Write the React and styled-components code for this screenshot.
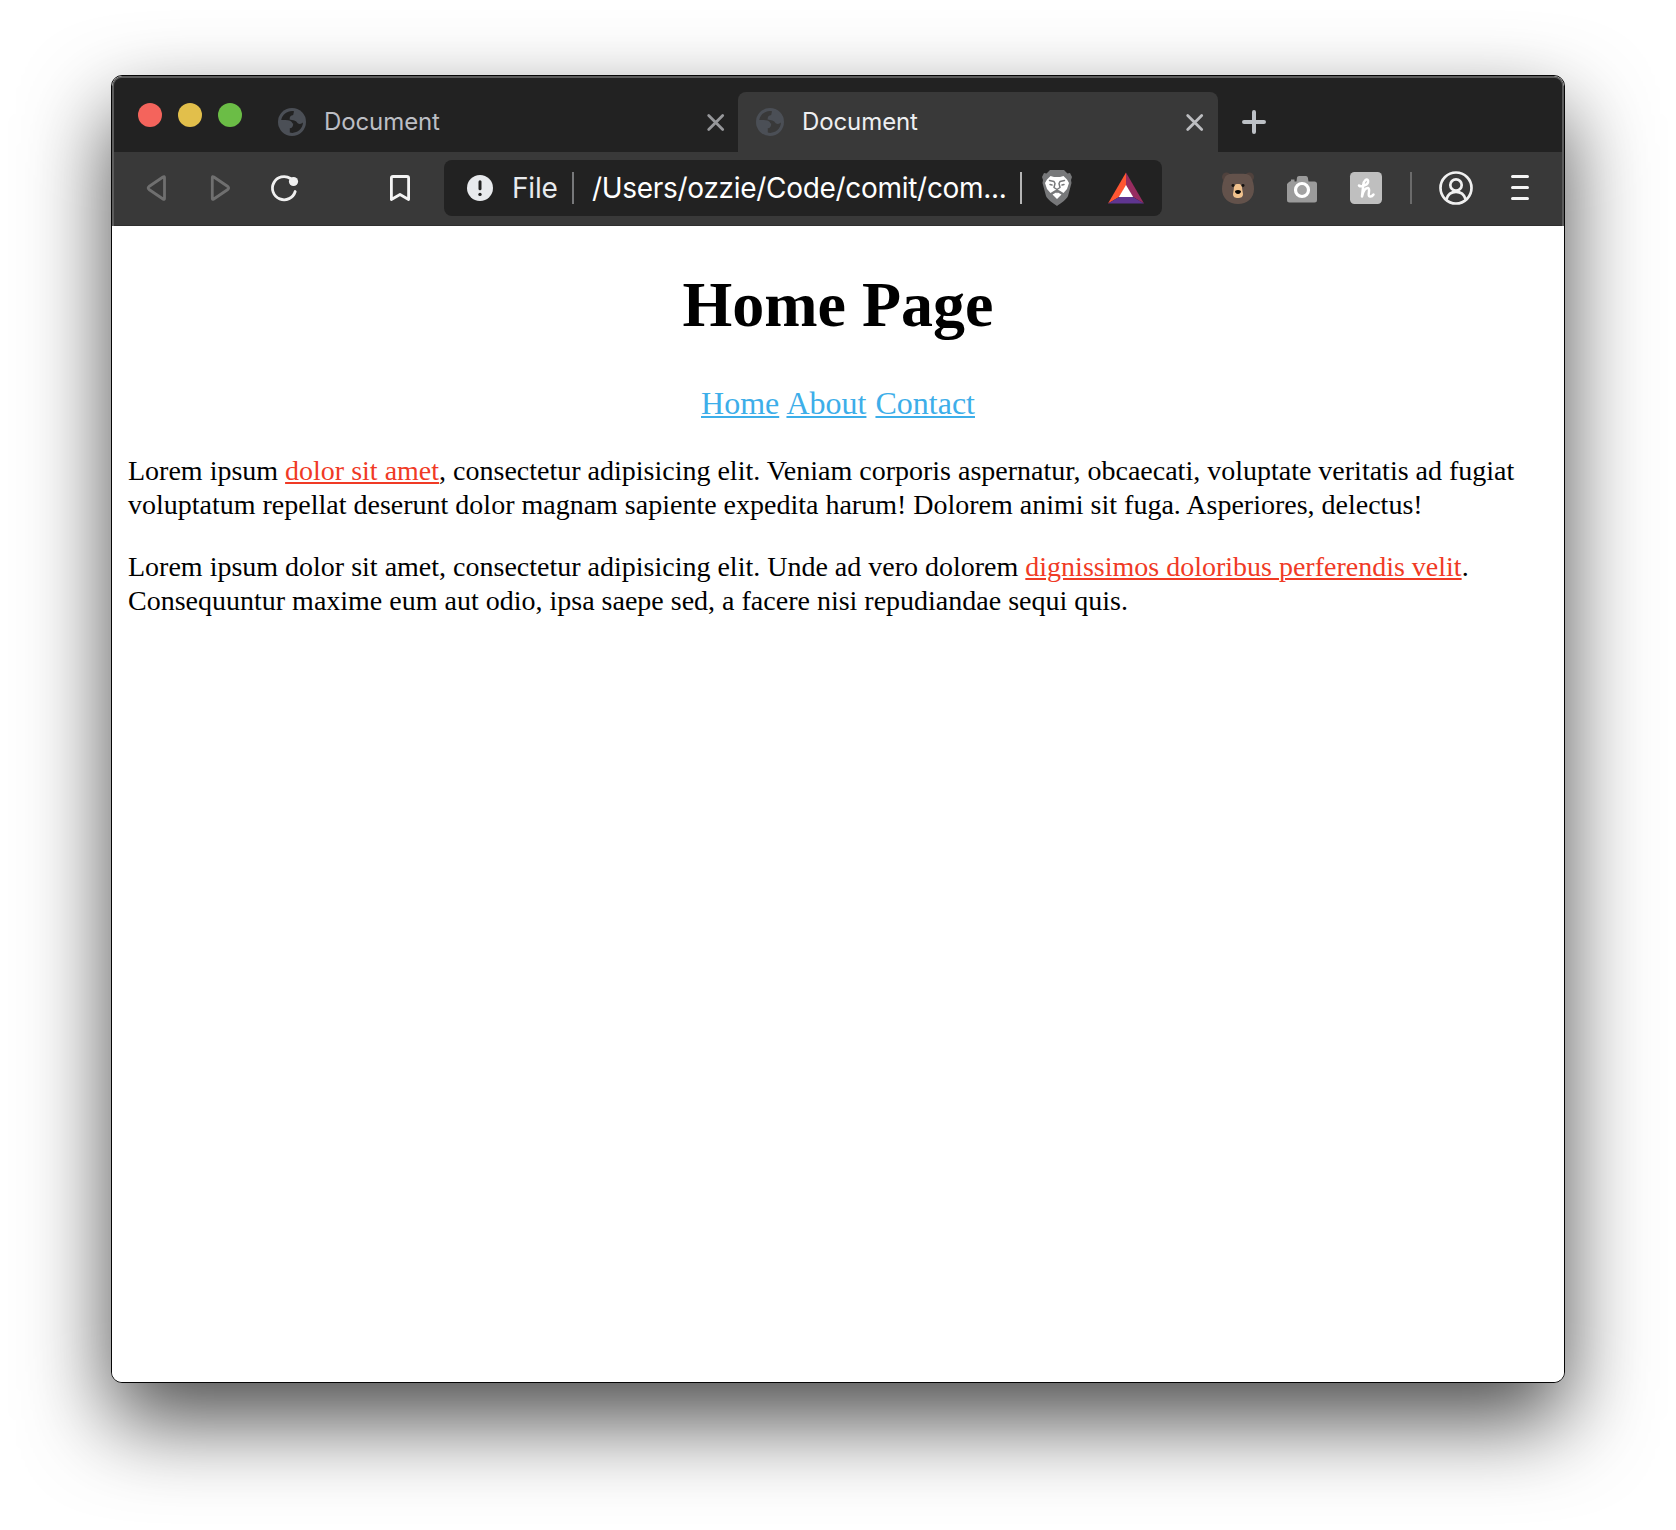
import React from "react";
import styled, { createGlobalStyle } from "styled-components";

const Global = createGlobalStyle`
  * { box-sizing: border-box; }
  body { margin: 0; background: #fff; }
`;

const Desktop = styled.div`
  width: 1676px;
  height: 1530px;
  padding: 75px 111px 0;
  overflow: hidden;
  background: #fff;
`;

const Window = styled.div`
  display: flex;
  flex-direction: column;
  width: 1454px;
  height: 1308px;
  border: 1px solid #050505;
  border-radius: 11px;
  overflow: hidden;
  background: #fff;
  box-shadow: 0 38px 86px rgba(0, 0, 0, 0.7);
`;

const Chrome = styled.header`
  border: solid #5c5c5c;
  border-width: 2px 2px 0;
  border-radius: 10px 10px 0 0;
  background: #393939;
  font-family: Inter, "Liberation Sans", sans-serif;
`;

const TabStrip = styled.div`
  display: flex;
  align-items: flex-end;
  height: 74px;
  background: #222;
  border-radius: 8px 8px 0 0;
`;

const Lights = styled.div`
  display: flex;
  gap: 16px;
  align-self: flex-start;
  padding: 25px 0 0 24px;
  width: 145px;
`;

const Light = styled.span`
  width: 24px;
  height: 24px;
  border-radius: 50%;
  background: ${(p) => p.$color};
`;

const Tab = styled.div`
  display: flex;
  align-items: center;
  width: ${(p) => (p.$active ? 480 : 479)}px;
  height: 60px;
  padding: 0 ${(p) => (p.$active ? "15px 0 18px" : "14px 0 19px")};
  border-radius: 8px 8px 0 0;
  background: ${(p) => (p.$active ? "#393939" : "transparent")};
  color: ${(p) => (p.$active ? "#eeeff1" : "#bcbec4")};
`;

const TabTitle = styled.span`
  flex: 1;
  padding-left: 18px;
  font-size: 24px;
  line-height: 30px;
  letter-spacing: -0.1px;
`;

const Icon = styled.svg`
  display: block;
  flex: none;
  overflow: visible;
  fill: none;
  stroke-linecap: round;
  stroke-linejoin: round;
`;

const NewTab = styled.div`
  display: flex;
  align-items: center;
  height: 60px;
  padding-left: 24px;
`;

const Toolbar = styled.div`
  display: flex;
  align-items: center;
  height: 74px;
  padding: 0 0 1px 32px;
  border-bottom: 1px solid #2f2f2f;
`;

const Slot = styled.div`
  flex: none;
  margin-left: ${(p) => p.$gap || 0}px;
  padding-top: ${(p) => p.$drop || 0}px;
`;

const AddressBar = styled.div`
  display: flex;
  align-items: center;
  width: 718px;
  height: 56px;
  margin-left: 34px;
  padding-left: 23px;
  border-radius: 8px;
  background: #222;
  font-size: 28px;
  line-height: 34px;
  white-space: nowrap;
`;

const Scheme = styled.span`
  width: 45px;
  margin-left: 19px;
  color: #e8eaed;
  letter-spacing: -0.2px;
`;

const Path = styled.span`
  width: 414px;
  margin-left: 18px;
  color: #fff;
  letter-spacing: -0.3px;
`;

const Divider = styled.span`
  flex: none;
  width: 2px;
  height: 32px;
  margin-left: ${(p) => p.$gap}px;
  background: ${(p) => p.$color};
`;

const Page = styled.main`
  flex: 1;
  padding: 42px 16px 0;
  background: #fff;
  color: #000;
  font-family: "Liberation Serif", "Times New Roman", serif;
`;

const Title = styled.h1`
  margin: 0 0 43px;
  font-size: 64px;
  line-height: 74px;
  text-align: center;
`;

const Nav = styled.nav`
  margin-bottom: 32px;
  font-size: 32px;
  line-height: 37px;
  text-align: center;
  word-spacing: 1px;
`;

const Link = styled.a`
  color: ${(p) => (p.$inline ? "#f03a25" : "#3daee9")};
  text-decoration: underline;
  text-decoration-thickness: 2px;
  text-underline-offset: 2px;
`;

const Paragraph = styled.p`
  margin: 0 0 28px;
  font-size: 28px;
  line-height: 34px;
  white-space: nowrap;
`;

const Globe = ({ land }) => (
  <Icon width="28" height="28" viewBox="0 0 28 28">
    <circle cx="14" cy="14" r="14" fill="#4b4f56" />
    <path
      fill={land}
      d="M16 3.2 C10 2.2 4.500 6 3.200 12 H7.500 C11 12 14 13.200 14.600 15.400 H15.200 C15.200 18.500 14 20 11.800 20.200 V24.600 C18 26.200 24.600 21.500 25 14.600 C23.600 16 21.800 16.200 20 15.600 C18.600 14 18 13 16.200 12.600 L11.600 11.500 C11.600 8.500 12.800 7.500 15.200 7 Z"
    />
  </Icon>
);

const Close = ({ color }) => (
  <Icon width="17" height="17" viewBox="0 0 17 17" stroke={color} strokeWidth="2.8">
    <path d="M1.700 1.500 15.700 15.500 M15.700 1.500 1.700 15.500" />
  </Icon>
);

const Lion = () => (
  <Icon width="30" height="36" viewBox="0 0 30 36">
    <path
      fill="#77787a"
      d="M8 0 H22 L25.500 3.500 L28 3 L30 7 L29 10 L29.500 13 L26 26 C25 29 18 34 15 36 C12 34 5 29 4 26 L0.500 13 L1 10 L0 7 L2 3 L4.500 3.500Z"
    />
    <path
      fill="#fff"
      d="M8.500 6 L12 7 H18 L21.500 6 L25 9.500 L27 13 L25 19 L21.500 23 L17.500 20.500 L15 19.500 L12.500 20.500 L8.500 23 L5 19 L3 13 L5 9.500Z M15 22 L19.500 24.500 L15 29 L10.500 24.500Z"
    />
    <path
      stroke="#77787a"
      strokeWidth="1.500"
      d="M7.500 10.500 L12 11.500 L13 13.500 L12 17.500 L15 19.500 L18 17.500 L17 13.500 L18 11.500 L22.500 10.500 M8 14.500 L10 15 M22 14.500 L20 15 M15 20 V22.500"
    />
  </Icon>
);

const Triangle = () => (
  <Icon width="36" height="32" viewBox="0 0 36 32">
    <path fill="#ff5632" d="M18 0.500 V14 L11 25 L0 31.500Z" />
    <path fill="#972c60" d="M18 0.500 L36 31.500 L25 25 L18 14Z" />
    <path fill="#5f3590" d="M0 31.500 L11 25 H25 L36 31.500Z" />
    <path fill="#fff" d="M18 13 L25.200 25 H10.800Z" />
  </Icon>
);

const Bear = () => (
  <Icon width="32" height="32" viewBox="0 0 32 32">
    <circle cx="4.500" cy="5" r="4.500" fill="#50423d" />
    <circle cx="27.500" cy="5" r="4.500" fill="#50423d" />
    <path
      fill="#63524b"
      d="M16 1.800 C24 1.500 27 2 29 5 C31 9 32 13 32 17 C32 26 25 32 16 32 C7 32 0 26 0 17 C0 13 1 9 3 5 C5 2 8 1.500 16 1.800Z"
    />
    <path
      fill="#f0c18d"
      d="M16 12 C19.500 12 20 14 20.200 17 L21 22 C21 25 19 26 16 26 C13 26 11 25 11 22 L11.800 17 C12 14 12.500 12 16 12Z"
    />
    <ellipse cx="11" cy="13.500" rx="1.500" ry="1.400" fill="#151210" />
    <ellipse cx="21" cy="13.500" rx="1.500" ry="1.400" fill="#151210" />
    <path fill="#080706" d="M13 19 Q16 17 19 19 Q19 21.500 16 22 Q13 21.500 13 19Z" />
  </Icon>
);

const Camera = () => (
  <Icon width="30" height="27" viewBox="0 0 30 27">
    <path
      fill="#9b9b9b"
      d="M2 6 L4 5 V3.500 H7.500 V5.500 H9.500 L10 1.500 Q10.200 0 12 0 H19 Q20.500 0 20.800 1.500 L21.500 5.500 H27.500 Q30 5.500 30 8 V24 Q30 26.500 27.500 26.500 H2.500 Q0 26.500 0 24 V8Z"
    />
    <circle cx="15" cy="14" r="6.500" stroke="#fff" strokeWidth="3.200" fill="#a2a2a2" />
  </Icon>
);

const Honey = () => (
  <Icon width="32" height="32" viewBox="0 0 32 32">
    <rect width="32" height="32" rx="4.500" fill="#bfbfbf" />
    <path
      stroke="#fff"
      strokeWidth="2.500"
      d="M9 13.500 C11 15.500 19 13 18 8.500 C17 6 13.500 8.500 13.300 13 L12 24.500 C13 19 15.500 15.500 18 16 C21 17 17 23.500 19.500 24.300 C21 24.700 22.500 24 23.500 22.500"
    />
  </Icon>
);

export default function App() {
  return (
    <>
      <Global />
      <Desktop>
        <Window>
          <Chrome>
            <TabStrip>
              <Lights>
                <Light $color="#f4645c" />
                <Light $color="#e2bf4b" />
                <Light $color="#6bbd46" />
              </Lights>
              <Tab>
                <Globe land="#222" />
                <TabTitle>Document</TabTitle>
                <Close color="#96979a" />
              </Tab>
              <Tab $active>
                <Globe land="#393939" />
                <TabTitle>Document</TabTitle>
                <Close color="#bcbdc0" />
              </Tab>
              <NewTab>
                <Icon width="24" height="24" viewBox="0 0 24 24" stroke="#bdc1c6" strokeWidth="4">
                  <path d="M12 2V22M2 12H22" />
                </Icon>
              </NewTab>
            </TabStrip>
            <Toolbar>
              <Icon width="20" height="26" viewBox="0 0 20 26" stroke="#6f6f6f" strokeWidth="2.800">
                <path d="M18.500 2.500V23.500Q18.500 25 17 24L3 14.500Q1.300 13 3 11.500L17 2Q18.500 1 18.500 2.500Z" />
              </Icon>
              <Slot $gap={44}>
                <Icon width="20" height="26" viewBox="0 0 20 26" stroke="#6f6f6f" strokeWidth="2.800">
                  <path d="M2.300 2.500V23.500Q2.300 25 3.800 24L17.800 14.500Q19.500 13 17.800 11.500L3.800 2Q2.300 1 2.300 2.500Z" />
                </Icon>
              </Slot>
              <Slot $gap={41}>
                <Icon width="28" height="26" viewBox="0 0 28 26">
                  <path stroke="#f0f0f0" strokeWidth="2.800" d="M19.500 3.500A11.600 11.600 0 1 0 24.200 16.500" />
                  <circle cx="22.500" cy="6.500" r="4.600" fill="#f0f0f0" />
                </Icon>
              </Slot>
              <Slot $gap={91}>
                <Icon width="20" height="26" viewBox="0 0 20 26" stroke="#f4f4f4" strokeWidth="2.800">
                  <path d="M3 1.500H17Q18.600 1.500 18.600 3V24.500L10 19.500L1.400 24.500V3Q1.400 1.500 3 1.500Z" />
                </Icon>
              </Slot>
              <AddressBar>
                <Icon width="26" height="26" viewBox="0 0 26 26">
                  <circle cx="13" cy="13" r="13" fill="#e8eaed" />
                  <path stroke="#222" strokeWidth="3" d="M13 6.700V13.800" />
                  <circle cx="13" cy="19.400" r="1.700" fill="#222" />
                </Icon>
                <Scheme>File</Scheme>
                <Divider $gap={15} $color="#77787a" />
                <Path>/Users/ozzie/Code/comit/com...</Path>
                <Divider $gap={14} $color="#b5b5b5" />
                <Slot $gap={20}>
                  <Lion />
                </Slot>
                <Slot $gap={36}>
                  <Triangle />
                </Slot>
              </AddressBar>
              <Slot $gap={60}>
                <Bear />
              </Slot>
              <Slot $gap={33} $drop={2}>
                <Camera />
              </Slot>
              <Slot $gap={33}>
                <Honey />
              </Slot>
              <Divider $gap={28} $color="#6b6b6b" />
              <Slot $gap={27}>
                <Icon width="34" height="34" viewBox="0 0 34 34" stroke="#f0f0f0" strokeWidth="2.700">
                  <circle cx="17" cy="17" r="15.500" />
                  <circle cx="17" cy="14" r="5.700" />
                  <path d="M7.500 28C9 23 13 20.800 17 20.800S25 23 26.500 28" />
                </Icon>
              </Slot>
              <Slot $gap={38}>
                <Icon width="18" height="26" viewBox="0 0 18 26" stroke="#f4f4f4" strokeWidth="3">
                  <path d="M1.500 1.500H16.500M1.500 12.500H16.500M1.500 23.500H16.500" />
                </Icon>
              </Slot>
            </Toolbar>
          </Chrome>
          <Page>
            <Title>Home Page</Title>
            <Nav>
              <Link>Home</Link> <Link>About</Link> <Link>Contact</Link>
            </Nav>
            <Paragraph>
              Lorem ipsum <Link $inline>dolor sit amet</Link>, consectetur adipisicing elit. Veniam corporis aspernatur,
              obcaecati, voluptate veritatis ad fugiat
              <br />
              voluptatum repellat deserunt dolor magnam sapiente expedita harum! Dolorem animi sit fuga. Asperiores,
              delectus!
            </Paragraph>
            <Paragraph>
              Lorem ipsum dolor sit amet, consectetur adipisicing elit. Unde ad vero dolorem{" "}
              <Link $inline>dignissimos doloribus perferendis velit</Link>.
              <br />
              Consequuntur maxime eum aut odio, ipsa saepe sed, a facere nisi repudiandae sequi quis.
            </Paragraph>
          </Page>
        </Window>
      </Desktop>
    </>
  );
}
